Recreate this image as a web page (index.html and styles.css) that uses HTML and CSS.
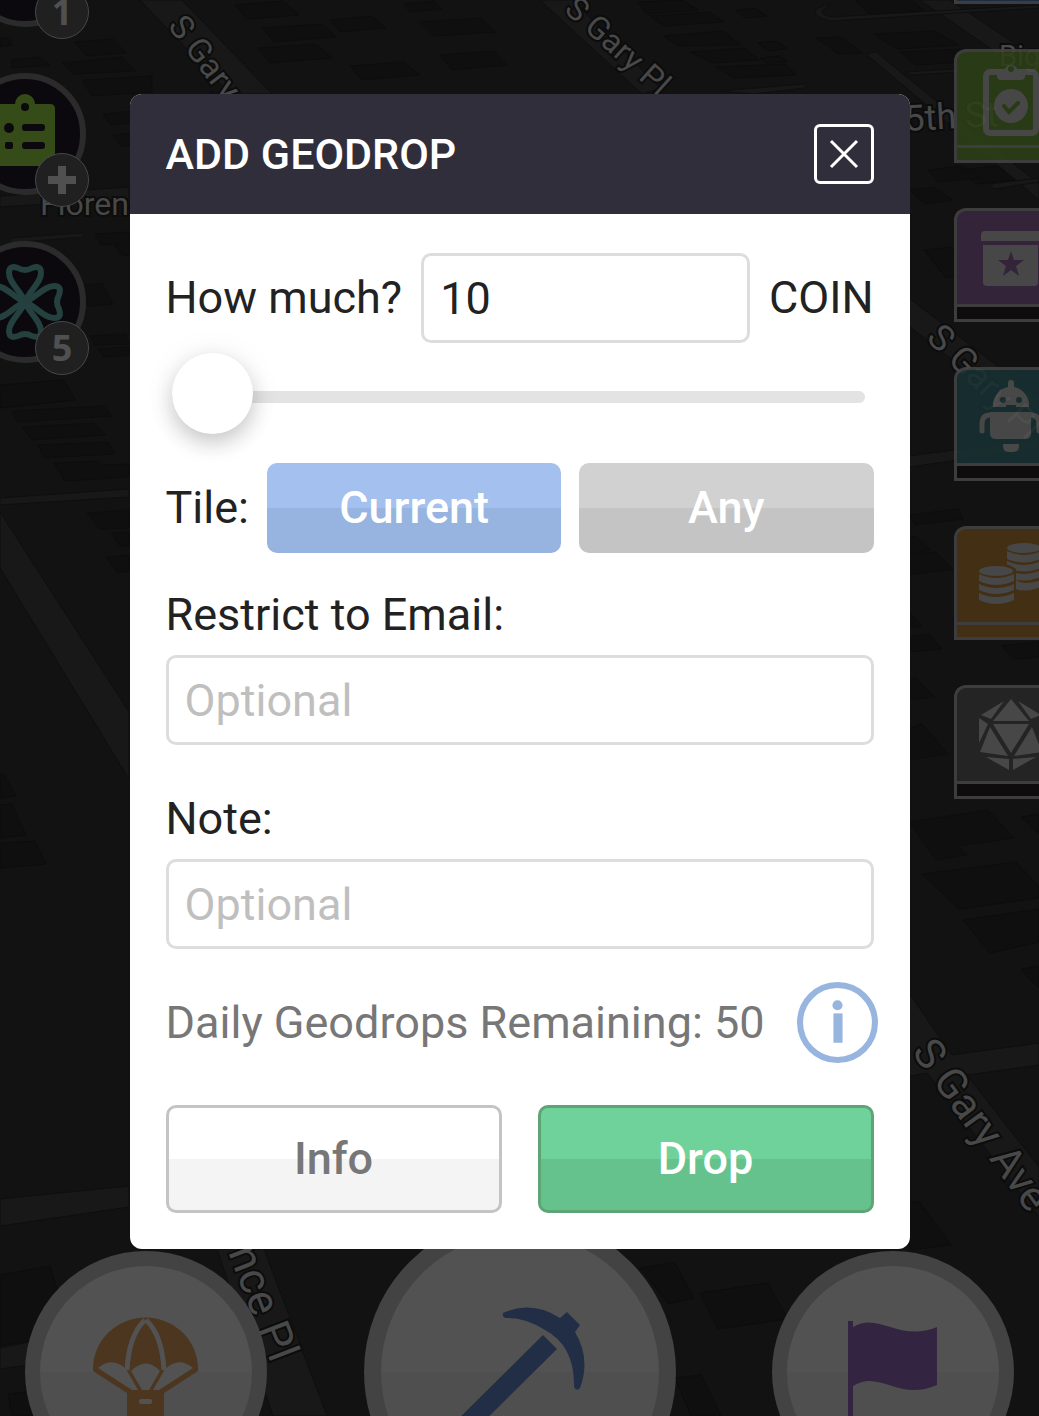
FILE: index.html
```
<!DOCTYPE html>
<html lang="en">
<head>
    <meta charset="UTF-8">
    <meta name="viewport" content="width=device-width, initial-scale=1.0">
    <title>Add Geodrop</title>
    <link rel="stylesheet" href="styles.css">
</head>
<body>
    <div class="screen">
        <!-- Map -->
        <svg class="map" viewBox="0 0 1039 1416" preserveAspectRatio="xMidYMid slice" aria-hidden="true">
            <g class="building">
                <path d="M75 42l38-3 13 14-40 3zM62 63l60-6 14 14-62 3zM82 80l70-4 0 16-60 4zM12 60l28-3 10 8-38 3zM0 38l8 0 4 7-12 2zM103 114l30-3v12l-22 2zM113 135l20-2v12l-12 1zM95 234l34-2v11l-28 2zM115 246l14-1v10l-6 1zM80 286l22-3 11 21-25 2zM90 336l36-2 3 10-34 1zM98 349l31-2v8l-25 2zM0 385l64-5 12 20-76 8z"/>
                <path d="M235 5l48-4 16 14-52 4zM262 28l60-4 14 13-62 5zM258 48l58-4 16 14-62 5zM330 20l42-4 14 12-46 4zM350 66l54-4 16 13-58 5zM420 22l60-4 16 14-62 4zM440 55l54-4 14 14-56 5zM404 4l30-3 8 8-32 3z"/>
                <path d="M638 2l44-2 16 10-52 4zM650 16l60-4 14 10-60 4zM735 10l20-2 12 8-22 2zM663 36l60-5 18 14-62 1zM690 52l55-4 14 12-46 3zM758 43l18-2 12 8-20 2zM716 67l70-3 10 11-62 3zM816 38l24-1 23 16-24 1zM855 0l54-1 16 12-54 4zM873 34l62-3 24 14-62 4zM900 52l64-3 20 12-68 4zM760 58l20-2 8 6-22 1zM960 170l36-4 22 14-42 4zM928 170l34-4 18 12-42 4z"/>
                <path d="M12 411l92-5 8 10-94 6zM22 427l72-4 12 12-74 5zM38 445l70-3 7 12-71 4zM54 463l44-2 4 4 27-1v13l-64 4zM87 513l42-3v18l-29 1zM111 533l18-1v14l-9 0zM106 557l23-2v17l-12 0z"/>
                <path d="M0 774l4 0 12 22-16 2zM0 805l12-1 14 31-26 3zM0 843l35-2 11 23-46 4z"/>
                <path d="M909 190l24-3 20 13-28 4zM924 250l28-3 14 28-20 3zM909 515l50-6 4 10-48 6zM909 538l6-2 16 14-22 3zM909 554l27-2 17 17-44 6zM909 612l13 14-13 2zM909 637l20-3 13 15-33 3zM1001 646l38-4v15l-24 2zM909 680l6-3 20 20-26 3zM909 728l13-4 26 30-39 6z"/>
                <path d="M909 822l79-12 26 28-56 8 9 9-31 5zM922 874l94-12 23 25v11l-80 11zM963 920l76-11v33l-49 11zM1021 969l18-3v22l-10-9zM1021 817l18-3v20zM894 1206l25-5 32 44-40 5zM700 1293l68-10 20 36-70 10zM640 1268l34-6 20 36-25 6zM675 1378l26-3 20 41h-30z"/>
                <path d="M0 1275l50-9 20 68-70 12zM8 1394l38-5v27h-34z"/>
            </g>
            <g class="road">
                <path d="M140 0h42l90 94h-42zM540 0h32l88 88-18 6zM0 498l129-9v8l-129 8zM0 512l129 200v67l-129-211zM0 1199l129-13v21l-129 19zM217 1249h47l63 167h-54z"/>
                <path d="M0 196l129-9v12l-129 8zM10 238l72-5q5 2 0 4l-72 6zM0 1348l40-8-3 24-37 5zM920 0h30l89 60v22zM866 54l10-2 163 132v16zM909 298l130 100v30l-130-102zM909 456l130-17v10l-130 18zM909 993l43 62 87-12v22l-72 10 72 92v50l-112-144-18 3z"/>
                <path d="M830 4q-30 8 0 17l209-13v-3l-208 12q-18-4 0-12zM905 72l134-8v3l-128 8zM720 91l84-7q4 2 0 4l-50 6zM990 184l49-6v4l-45 7z"/>
            </g>
            <g class="street" font-size="33">
                <text x="167" y="26" transform="rotate(53 167 26)">S Gary</text>
                <text x="563" y="11" transform="rotate(42 563 11)" font-size="32">S Gary Pl</text>
                <text x="905" y="131" transform="rotate(-3 905 131)" font-size="36">5th St</text>
                <text x="999" y="66" font-size="29">Big</text>
                <text x="40" y="215" font-size="32">Florence</text>
                <text x="925" y="339" transform="rotate(45 925 339)" font-size="36">S Gary Pl</text>
                <text x="911" y="1052" transform="rotate(54 911 1052)" font-size="42">S Gary Ave</text>
                <text x="228" y="1252" transform="rotate(69 228 1252)" font-size="44">nce Pl</text>
            </g>
        </svg>

        <!-- Left buttons -->
        <nav class="hud-left">
            <button class="orb" aria-label="Level"><span class="badge">1</span></button>
            <button class="orb" aria-label="Tasks">
                <svg viewBox="0 0 110 110">
                    <path class="lime" d="M30 25H45A10 10 0 0 1 65 25H80Q85 25 85 30V87H25V30Q25 25 30 25z"/>
                    <circle class="hole" cx="55" cy="28" r="4"/>
                    <circle class="hole" cx="39" cy="49" r="5"/>
                    <rect class="hole" x="52" y="45" width="23" height="7" rx="3"/>
                    <rect class="hole" x="35" y="63" width="8" height="7" rx="2"/>
                    <rect class="hole" x="52" y="63" width="23" height="7" rx="3"/>
                </svg>
                <span class="badge"><svg class="plus" viewBox="0 0 28 28"><path d="M10 0h8v10h10v8H18v10h-8V18H0v-8h10z"/></svg></span>
            </button>
            <button class="orb" aria-label="Luck">
                <svg class="clover" viewBox="0 0 110 110">
                    <path id="leaf" d="M55 55C51 44 39 36 39 26C39 18 45 20 48 21Q55 25 62 21C65 20 71 18 71 26C71 36 59 44 55 55z"/>
                    <use href="#leaf" transform="rotate(90 55 55)"/>
                    <use href="#leaf" transform="rotate(180 55 55)"/>
                    <use href="#leaf" transform="rotate(270 55 55)"/>
                </svg>
                <span class="badge">5</span>
            </button>
        </nav>

        <!-- Right tabs -->
        <nav class="hud-right">
            <button class="tab blue" aria-label="Map"></button>
            <button class="tab green" aria-label="Surveys">
                <svg viewBox="0 0 82 93">
                    <rect class="line" x="29" y="20" width="50" height="61" rx="4"/>
                    <path d="M40 20H47A7 7 0 1 1 61 20H68V24Q68 28 64 28H44Q40 28 40 24z"/>
                    <circle class="cut" cx="54" cy="17" r="3"/>
                    <circle cx="54" cy="54" r="17"/>
                    <path class="cut-line" d="M47 54l5 6 9-9"/>
                </svg>
            </button>
            <button class="tab purple" aria-label="Store">
                <svg viewBox="0 0 82 93">
                    <path d="M24 30V24Q24 20 28 20H84V30zM26 34H81V71Q81 75 77 75H30Q26 75 26 71z"/>
                    <path class="cut" d="M54 40l3 9h10l-8 6 3 10-8-6-8 6 3-10-8-6h10z"/>
                </svg>
            </button>
            <button class="tab teal" aria-label="Bots">
                <svg viewBox="0 0 82 93">
                    <path d="M36 37A18 19 0 0 1 51 17V13A3 3 0 0 1 57 13V17A18 19 0 0 1 72 37H59V35H49V37zM33 42H74V63Q74 69 68 69H39Q33 69 33 63zM46 74H62V76Q62 82 56 82H52Q46 82 46 76z"/>
                    <path class="arm" d="M33 45Q25 45 25 54V61M74 45Q82 45 82 54V61"/>
                    <circle class="cut" cx="46" cy="30" r="3"/>
                    <circle class="cut" cx="62" cy="30" r="3"/>
                </svg>
            </button>
            <button class="tab orange" aria-label="Coins">
                <svg viewBox="0 0 82 93">
                    <ellipse cx="67" cy="19" rx="17" ry="5"/>
                    <path d="M50 22Q67 30 84 22V30Q67 37 50 30zM50 32Q67 40 84 32V39Q67 46 50 39zM50 41Q67 49 84 41V48Q67 55 50 48zM59 51Q67 57 84 51V58Q67 64 59 60z"/>
                    <path class="cut" d="M20 40Q39 26 59 40V70H20z"/>
                    <ellipse cx="39" cy="42" rx="17" ry="5"/>
                    <path d="M22 45Q39 53 57 45V52Q39 60 22 52zM22 55Q39 63 57 55V61Q39 69 22 61zM22 64Q39 72 57 64V71Q39 79 22 71z"/>
                </svg>
            </button>
            <button class="tab grey" aria-label="Games">
                <svg viewBox="0 0 82 93">
                    <path d="M54 11L72 33H36zM47 13L24 27 34 31zM22 30L31 36 22 55zM33 39L23 64 51 68zM36 36H72L54 65zM29 69L52 71V82zM61 13L84 27 74 31zM75 39L85 64 57 68zM79 69L56 71V82z"/>
                </svg>
            </button>
        </nav>

        <!-- Bottom actions -->
        <nav class="actions">
            <button class="action" aria-label="Geodrops">
                <svg viewBox="0 0 212 212">
                    <path class="brown" d="M53 103A52 51 0 0 1 158 103V105L124 127V212H87V127L53 105z"/>
                    <path class="blank" d="M58 102Q72 90 86 103L98 124H92zM91 105Q106 90 120 105L109 124H102zM153 102Q139 90 125 103L113 124H119z"/>
                    <path class="seam" d="M105 54C92 66 88 86 87 104M106 54C119 66 123 86 124 104"/>
                    <rect class="blank" x="99" y="133" width="13" height="5" rx="2"/>
                </svg>
            </button>
            <button class="action large" aria-label="Mine">
                <svg viewBox="0 0 278 278">
                    <path class="navy" d="M122 80Q151 67 179 85L186 79 199 92 194 99Q210 126 199 155Q196 159 193 154Q194 113 164 97Q144 84 124 85Q121 83 122 80zM162 102L176 116 70 221H42z"/>
                </svg>
            </button>
            <button class="action" aria-label="Claim">
                <svg viewBox="0 0 212 212">
                    <path class="violet" d="M61 55H66V61C92 45 112 77 150 61V119C112 136 92 103 66 120V212H61z"/>
                </svg>
            </button>
        </nav>

        <!-- Dialog -->
        <main class="modal" role="dialog" aria-labelledby="title">
            <header class="modal-header">
                <h1 id="title">ADD GEODROP</h1>
                <button class="close" aria-label="Close">
                    <svg viewBox="0 0 54 54"><path d="M14 14L40 40M40 14L14 40"/></svg>
                </button>
            </header>
            <form class="modal-body">
                <div class="amount">
                    <label for="amount">How much?</label>
                    <input class="field" type="text" inputmode="numeric" id="amount" value="10">
                    <span>COIN</span>
                </div>
                <input class="slider" type="range" min="10" max="1000" value="10" aria-label="Amount">
                <div class="tile">
                    <span>Tile:</span>
                    <button class="choice selected" type="button">Current</button>
                    <button class="choice" type="button">Any</button>
                </div>
                <div class="group">
                    <label for="email">Restrict to Email:</label>
                    <input class="field" type="text" id="email" placeholder="Optional">
                </div>
                <div class="group">
                    <label for="note">Note:</label>
                    <input class="field" type="text" id="note" placeholder="Optional">
                </div>
                <div class="remaining">
                    <span>Daily Geodrops Remaining: 50</span>
                    <button class="help" type="button" aria-label="About daily geodrops">
                        <svg viewBox="0 0 80 80">
                            <circle class="ring" cx="40" cy="40" r="37"/>
                            <circle cx="40" cy="23" r="5"/>
                            <rect x="36" y="31" width="9" height="29"/>
                        </svg>
                    </button>
                </div>
                <div class="buttons">
                    <button class="btn" type="button">Info</button>
                    <button class="btn drop" type="button">Drop</button>
                </div>
            </form>
        </main>
    </div>
</body>
</html>
```
FILE: styles.css
```
* {
    box-sizing: border-box;
}
body {
    margin: 0;
    background-color: #121212;
    color: #222;
    font-family: Roboto, "Open Sans", sans-serif;
    font-size: 45px;
    line-height: 60px;
}
.screen {
    position: relative;
    min-height: 100vh;
    padding: 94px 0 160px;
    overflow: hidden;
}
button, input {
    font: inherit;
    padding: 0;
    margin: 0;
}
button {
    cursor: pointer;
}
svg {
    display: block;
}

/* Map */
.map {
    position: absolute;
    top: 0;
    left: 0;
    width: 100%;
    height: 100%;
}
.building {
    fill: #0f0f0f;
    stroke: #0d0d0d;
}
.road {
    fill: #181818;
    stroke: #0f0f0f;
}
.street {
    fill: #484848;
    stroke: #0c0c0c;
    stroke-width: 4px;
    paint-order: stroke;
}

/* Left buttons */
.hud-left {
    position: absolute;
    top: -95px;
    left: -36px;
    display: flex;
    flex-direction: column;
    gap: 46px;
}
.orb {
    position: relative;
    width: 122px;
    height: 122px;
    border: 6px solid #2b2b2b;
    border-radius: 50%;
    background-color: #0b090e;
}
.badge {
    position: absolute;
    top: 74px;
    left: 65px;
    display: flex;
    align-items: center;
    justify-content: center;
    width: 54px;
    height: 54px;
    border: 1px solid #484848;
    border-radius: 50%;
    background-color: #202020;
    color: #505050;
    font-family: "Open Sans", sans-serif;
    font-size: 36px;
    font-weight: 700;
}
.plus {
    width: 28px;
    fill: #505050;
}
.lime {
    fill: #354b18;
}
.hole {
    fill: #0b090e;
}
.clover {
    fill: none;
    stroke: #24403f;
    stroke-width: 6px;
    stroke-linejoin: round;
}

/* Right tabs */
.hud-right {
    position: absolute;
    top: -110px;
    right: 0;
    display: flex;
    flex-direction: column;
    gap: 45px;
}
.tab {
    width: 85px;
    height: 114px;
    border: 3px solid #444;
    border-right: none;
    border-top-left-radius: 12px;
    background: linear-gradient(var(--tab) 93px, #444 93px, #444 96px, var(--strip) 96px);
    opacity: 0.88;
    overflow: hidden;
}
.tab svg {
    width: 82px;
    height: 93px;
    margin-bottom: 15px;
    fill: #4f4f4f;
}
.tab .cut {
    fill: var(--tab);
}
.tab .cut-line {
    fill: none;
    stroke: var(--tab);
    stroke-width: 4px;
    stroke-linecap: round;
}
.tab .line, .tab .arm {
    fill: none;
    stroke: #4f4f4f;
    stroke-width: 6px;
}
.tab .arm {
    stroke-width: 5px;
    stroke-linecap: round;
}
.blue {
    --tab: #1f2f4d;
    --strip: #1f2f4d;
}
.green {
    --tab: #2d4017;
    --strip: #2d4017;
}
.purple {
    --tab: #38273f;
    --strip: #0e0c0c;
}
.teal {
    --tab: #183032;
    --strip: #0e0c0c;
}
.orange {
    --tab: #493315;
    --strip: #493315;
}
.grey {
    --tab: #272727;
    --strip: #0e0c0c;
}

/* Bottom actions */
.actions {
    position: absolute;
    left: 0;
    right: 0;
    bottom: -112px;
    display: flex;
    align-items: center;
    justify-content: space-between;
    padding: 0 25px;
}
.action {
    width: 242px;
    height: 242px;
    border: 15px solid #434343;
    border-radius: 50%;
    background: linear-gradient(#525252 50%, #4f4f4f 50%);
}
.large {
    width: 312px;
    height: 312px;
    border-width: 17px;
}
.brown {
    fill: #4c3620;
}
.blank {
    fill: #525252;
}
.seam {
    fill: none;
    stroke: #525252;
    stroke-width: 5px;
}
.navy {
    fill: #222e46;
}
.violet {
    fill: #332541;
}

/* Dialog */
.modal {
    position: relative;
    width: 90%;
    max-width: 780px;
    margin: 0 auto;
    border-radius: 12px;
    background-color: #fff;
    overflow: hidden;
}
.modal-header {
    display: flex;
    align-items: center;
    justify-content: space-between;
    height: 120px;
    padding: 0 36px;
    background-color: #312e3b;
    color: #fff;
}
.modal-header h1 {
    margin: 0;
    font-size: 43px;
    font-weight: 500;
}
.close {
    width: 60px;
    height: 60px;
    border: 3px solid #fff;
    border-radius: 6px;
    background: none;
}
.close svg {
    fill: none;
    stroke: #fff;
    stroke-width: 3px;
}
.modal-body {
    padding: 39px 36px 36px;
}
.amount {
    display: flex;
    align-items: center;
    gap: 19px;
}
.amount .field {
    flex: 1;
}
.field {
    min-width: 0;
    width: 100%;
    height: 90px;
    padding: 0 16px;
    border: 3px solid #ddd;
    border-radius: 10px;
    background-color: #fff;
    color: #222;
}
.field::placeholder {
    color: #bfbfbf;
    opacity: 1;
}
.slider {
    display: block;
    width: calc(100% - 15px);
    height: 81px;
    margin: 13px 9px 26px 6px;
    appearance: none;
    background: none;
}
.slider::-webkit-slider-runnable-track {
    height: 12px;
    border-radius: 6px;
    background-color: #e3e3e4;
}
.slider::-webkit-slider-thumb {
    appearance: none;
    width: 81px;
    height: 81px;
    margin-top: -38px;
    border-radius: 50%;
    background-color: #fff;
    box-shadow: 0 9px 21px rgba(0, 0, 0, 0.2), 0 0 36px rgba(0, 0, 0, 0.05);
}
.tile {
    display: flex;
    align-items: center;
    gap: 18px;
    margin-bottom: 32px;
}
.choice {
    flex: 1;
    height: 90px;
    border: none;
    border-radius: 10px;
    background: linear-gradient(#d1d1d1 50%, #c4c4c4 50%);
    color: #fff;
    font-weight: 500;
}
.selected {
    background: linear-gradient(#a3c0ee 50%, #96b4df 50%);
}
.group {
    margin-bottom: 44px;
}
.group label {
    display: block;
    margin-bottom: 10px;
}
.remaining {
    display: flex;
    align-items: center;
    justify-content: space-between;
    margin: -11px -4px 42px 0;
    color: #777;
    white-space: nowrap;
}
.help {
    width: 81px;
    height: 81px;
    border: none;
    background: none;
}
.help svg {
    fill: #98b5e0;
}
.help .ring {
    fill: none;
    stroke: #98b5e0;
    stroke-width: 6px;
}
.buttons {
    display: flex;
    gap: 36px;
}
.btn {
    flex: 1;
    height: 108px;
    border: 3px solid #c4c4c4;
    border-radius: 10px;
    background: linear-gradient(#fff 50%, #f4f4f4 50%);
    color: #777;
    font-weight: 500;
}
.drop {
    border-color: #5fa475;
    background: linear-gradient(#70d29b 50%, #65c28d 50%);
    color: #fff;
}
```
